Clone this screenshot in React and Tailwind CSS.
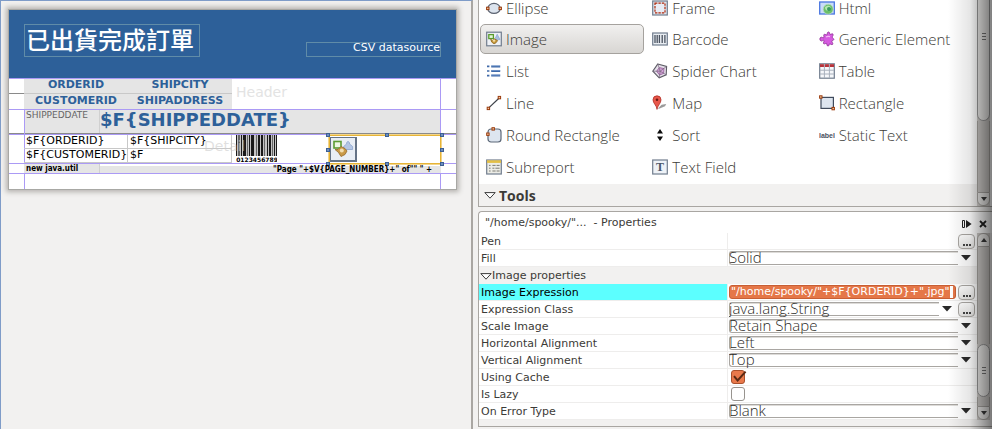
import React from "react";

const UI = "font-['Open_Sans','Noto_Sans',sans-serif] font-light";
const DEJA = "font-['DejaVu_Sans',sans-serif]";

const Svg = ({ children, className = "h-4 w-4" }) => (
  <svg viewBox="0 0 16 16" className={`shrink-0 ${className}`} aria-hidden="true">{children}</svg>
);
const Node = ({ x, y }) => (
  <rect x={x} y={y} width="2.4" height="2.4" fill="#f3c9a0" stroke="#9a3a0c" strokeWidth="1" />
);
const Paper = ({ y = 1, h = 14, fill = "#dfe6f0" }) => (
  <rect x="0.7" y={y} width="14.6" height={h} fill={fill} stroke="#717d8e" strokeWidth="1.2" />
);

const ICONS = {
  Ellipse: (
    <Svg><ellipse cx="8" cy="8.4" rx="6.2" ry="5" fill="#dce4ee" stroke="#5a6270" strokeWidth="1.2" /><Node x={0.6} y={7.2} /><Node x={13} y={7.2} /></Svg>
  ),
  Frame: (
    <Svg><Paper /><rect x="3" y="3.2" width="10" height="9.6" fill="#e8edf6" stroke="#b02a0c" strokeWidth="1.2" strokeDasharray="2.4 1" /></Svg>
  ),
  Html: (
    <Svg><rect x="0.7" y="2" width="14.6" height="12" fill="#c9dcf8" stroke="#4a76e0" strokeWidth="1.3" /><circle cx="9.2" cy="9.2" r="5" fill="#6cc06a" stroke="#b9d8c4" strokeWidth=".8" /><path d="M6 7.2c2-2.2 5-2 6 .2-1 2-3.4 1-3.2 3.4-1.6 0-2.8-1.6-2.8-3.6z" fill="#b5e8b0" /><circle cx="10" cy="9" r="2" fill="#3a9a62" /></Svg>
  ),
  Image: (
    <Svg>
      <Paper y={1.2} h={13.6} fill="#eef1f6" />
      <rect x="2.8" y="3.6" width="4.6" height="4" fill="#e4f3d8" stroke="#5a9c2e" strokeWidth="1.3" />
      <path d="M11.2 3.2l2.8 5.4H8.6z" fill="#a9bfdf" stroke="#7f9cc8" strokeWidth=".6" />
      <path d="M4.6 8.2l2 1.4 1.6-1.8 3.4 1.8-1.6 2.2-2 1-2.200-1.600z" fill="#c89a3c" stroke="#8f6820" strokeWidth=".8" />
      <circle cx="8" cy="9.6" r="1.2" fill="#f5e0a4" />
    </Svg>
  ),
  Barcode: (
    <Svg><Paper y={2} h={12} fill="#e9edf2" /><path d="M3 4v8M5.2 4v8M7.4 4v8M10.2 4v8M12.9 4v8" stroke="#4a5260" strokeWidth="1.3" /></Svg>
  ),
  "Generic Element": (
    <Svg><path d="M5.4 3.2c1 .2 2 1 2.8.4.2-.8-.2-2.4 1.2-2.6 1.6 0 1 2 1.6 2.4 1 .2 2.200-1.200 3-.2.6 1.200-.8 2-.8 3 .2 1 1.800 1.200 1.600 2.400-.2 1-1.800.6-2 1.400-.2 1.200 1.600 2.200.8 3.400-1 .8-2.200-.8-3.200-.4-.6.6 0 2-1.400 2-1.600-.2-.8-2-1.400-2.600-.8-.4-2 1-3 .2-.6-1.200.8-2 .4-3C4.200 8.800 3.600 10 2.200 10 .6 9.800.4 6.600 2 6.200c1.200-.2 2 1 2.800.4.600-1-.8-2.600.6-3.400z" fill="#d65be0" stroke="#94349c" strokeWidth=".9" /><path d="M7 6c1.500-1 3-.6 4-.4" stroke="#f4b4f6" strokeWidth="1.300" fill="none" /></Svg>
  ),
  List: (
    <Svg><path d="M5.200 3.400h9M5.200 8h9M5.200 12.600h9" stroke="#3f69a8" strokeWidth="2" /><path d="M1 3.400h2.400M1 8h2.400M1 12.600h2.400" stroke="#3f69a8" strokeWidth="1.600" /><path d="M5.200 2.800h9M5.200 7.400h9M5.200 12h9" stroke="#8fb0de" strokeWidth=".6" /></Svg>
  ),
  "Spider Chart": (
    <Svg><path d="M5.800 1L14.600 3.400l-.4 8.400-7 3L.8 8.200z" fill="#e6e0ea" stroke="#5c5c64" strokeWidth="1.100" /><path d="M7.400 4.600l4.600 1-.4 4.800-4 1.600-3-3.800z" fill="#d3a3d6" stroke="#8f5a96" strokeWidth=".8" /><path d="M5.800 1l2.400 7.200 6.400-4.800M.8 8.200h7.400l6 3.600M8.200 8.200l-1 6.600" fill="none" stroke="#75657c" strokeWidth=".7" /></Svg>
  ),
  Table: (
    <Svg><Paper y={0.8} h={14.4} fill="#f6f8fb" /><path d="M1 2.600h14" stroke="#b8323a" strokeWidth="2.800" /><path d="M1 7.200h14M1 11h14M5.400 1v14M10.400 1v14" stroke="#a8b0bc" strokeWidth="1" /></Svg>
  ),
  Line: (
    <Svg><path d="M2.200 13.400L13.200 3" stroke="#3c4048" strokeWidth="1.200" /><Node x={1.2} y={12.2} /><Node x={12.2} y={1.400} /></Svg>
  ),
  Map: (
    <Svg><path d="M6 13.400l3.600-3.600 4.600-.8-1.200 2.200-6 2.600z" fill="#8f8f8f" opacity=".9" /><path d="M5 14.400C4.800 10.400 1 8.400 1 4.800a4 4 0 018 0c0 3.600-3.400 5.600-4 9.600z" fill="#e8574a" stroke="#b03028" strokeWidth=".8" /><circle cx="5" cy="4.800" r="1.300" fill="#6a1a14" /></Svg>
  ),
  Rectangle: (
    <Svg><rect x="2" y="2.400" width="12.400" height="11" fill="#dde5ef" stroke="#3f4a5c" strokeWidth="1.200" /><Node x={0.600} y={0.800} /><Node x={13} y={12.400} /></Svg>
  ),
  "Round Rectangle": (
    <Svg><rect x="2" y="2" width="13" height="13" rx="3" fill="#dde5ef" stroke="#5c6878" strokeWidth="1.200" /><Node x={6} y={0.700} /><Node x={0.700} y={6} /></Svg>
  ),
  Sort: (
    <Svg><path d="M8 2l3 4.600H5zM8 14l3-4.600H5z" fill="#0a0a0a" /></Svg>
  ),
  "Static Text": (
    <Svg><text x="0" y="11" fontFamily="Liberation Sans, sans-serif" fontSize="7" fontWeight="700" fill="#4a5060">label</text></Svg>
  ),
  Subreport: (
    <Svg><Paper fill="#ecece6" /><path d="M1 2.600h14" stroke="#e3bf45" strokeWidth="2.600" /><path d="M3 6.400h1.600M3 9.200h1.600M3 12h1.600M6.400 6.400h3.200M10.600 6.400h3M6.400 9.200h2M9.400 9.200h4.200M6.400 12h3.200M10.600 12h3" stroke="#7c7c74" strokeWidth="1" /></Svg>
  ),
  "Text Field": (
    <Svg><Paper fill="#eef2f7" /><text x="8" y="12.200" textAnchor="middle" fontFamily="Liberation Serif, serif" fontSize="12" fontWeight="700" fill="#4a5668">T</text></Svg>
  ),
};

const PALETTE = [
  "Ellipse", "Frame", "Html",
  "Image", "Barcode", "Generic Element",
  "List", "Spider Chart", "Table",
  "Line", "Map", "Rectangle",
  "Round Rectangle", "Sort", "Static Text",
  "Subreport", "Text Field",
];

function PaletteItem({ name, firstRow }) {
  const selected = name === "Image";
  return (
    <button
      type="button"
      aria-pressed={selected}
      className={`flex items-center gap-1 whitespace-nowrap rounded-[5px] border-x px-[5px] text-[15px] text-[#3c3b37] ${
        firstRow ? "h-4 leading-4" : "h-[30px] border-y leading-5"
      } ${
        selected ? "border-[#a5a29e] bg-linear-to-b from-[#f1f0ef] to-[#d8d6d3]" : "border-transparent"
      }`}
    >
      {ICONS[name]}
      <span>{name}</span>
    </button>
  );
}

const Grip = () => (
  <span className="flex flex-col gap-[2px]">
    <i className="block h-px w-1 bg-[#777]" /><i className="block h-px w-1 bg-[#777]" /><i className="block h-px w-1 bg-[#777]" />
  </span>
);

function ScrollButton({ up = false }) {
  return (
    <button type="button" aria-label={up ? "Scroll up" : "Scroll down"} className={`flex h-[14px] shrink-0 items-center justify-center border border-[#aaa7a3] bg-[#f0efed] ${up ? "rounded-t-[6px]" : "rounded-b-[6px]"}`}>
      <svg viewBox="0 0 6 4" className="h-1 w-[6px]"><path d={up ? "M0 4h6L3 0z" : "M0 0h6L3 4z"} fill="#3c3c3c" /></svg>
    </button>
  );
}

const Triangle = () => (
  <svg viewBox="0 0 12 7" className="h-[7px] w-3 shrink-0"><path d="M.8.6h10.400L6 6.200z" fill="#fff" stroke="#3c3c3c" strokeWidth="1" /></svg>
);

function Palette() {
  return (
    <section className="flex h-[207px] overflow-hidden border-b border-l border-[#a9a6a2] bg-white">
      <div className="flex min-w-0 flex-1 flex-col">
        <div className={`grid flex-1 grid-cols-3 grid-rows-[22px] content-start gap-[2px] pl-px ${UI}`}>
          {PALETTE.map((name, i) => <PaletteItem key={name} name={name} firstRow={i < 3} />)}
        </div>
        <h2 className="flex h-[22px] items-center gap-[3px] bg-[#f2f1f0] pl-[5px] font-['Open_Sans',sans-serif] text-[14px] font-bold text-[#3c3b37]">
          <Triangle />Tools
        </h2>
      </div>
      <div className="mr-[2px] flex w-[13px] flex-col bg-[#cfccc9]">
        <div className="flex h-[121px] justify-center rounded-b-[7px] border border-t-0 border-[#999] bg-[#f0efed] pt-[33px]">
          <Grip />
        </div>
        <div className="flex-1 border-x border-[#aaa7a3]" />
        <ScrollButton />
      </div>
    </section>
  );
}

const MoreButton = ({ label }) => (
  <button type="button" aria-label={label} className="flex h-[15px] w-[17px] shrink-0 items-end justify-center gap-px rounded-[4px] border border-[#aaa7a3] bg-linear-to-b from-white to-[#e8e7e5] pb-[2px]">
    <i className="h-[2px] w-[2px] bg-[#444]" /><i className="h-[2px] w-[2px] bg-[#444]" /><i className="h-[2px] w-[2px] bg-[#444]" />
  </button>
);

function Combo({ id, value }) {
  return (
    <div className="flex h-full min-w-0 flex-1 items-center">
      <div className="relative h-full min-w-0 flex-1">
        <span className="absolute inset-x-0 top-px h-[14px] rounded-l-[3px] border border-r-0 border-[#a9a6a2] shadow-[inset_0_1px_0_#dddbd8]" />
        <select id={id} defaultValue={value} className={`relative -mt-[3px] block h-5 w-full appearance-none bg-transparent text-[15px] leading-5 text-[#2c2b28] outline-none ${UI}`}>
          <option>{value}</option>
        </select>
      </div>
      <svg viewBox="0 0 10 6" className="pointer-events-none ml-[3px] mr-1 h-[6px] w-[10px] shrink-0"><path d="M0 0h10L5 5.600z" fill="#2a2a2a" /></svg>
    </div>
  );
}

function Check({ id, checked }) {
  return (
    <div className="relative ml-[2px] h-[14px] w-4">
      <input id={id} type="checkbox" defaultChecked={checked} className="block h-[14px] w-[14px] appearance-none rounded-[3px] border border-[#98948f] bg-white checked:border-[#a8502c] checked:bg-[#e9794b]" />
      {checked && (
        <svg viewBox="0 0 16 14" className="pointer-events-none absolute left-0 top-0 h-[14px] w-4"><path d="M3 6.200l3.600 4.200L14.600 1.600" fill="none" stroke="#5a2a14" strokeWidth="2" /></svg>
      )}
    </div>
  );
}

function Row({ id, label, active, children }) {
  return (
    <div className="grid h-[17px] grid-cols-2 border-b border-[#eeedec] bg-white">
      <label htmlFor={id} className={`h-4 border-r border-[#eeedec] pl-[2px] pt-px leading-4 ${active ? "bg-[#5cffff] text-black" : ""}`}>{label}</label>
      <div className="flex h-4 min-w-0 items-center gap-[2px] pl-px pr-[2px]">{children}</div>
    </div>
  );
}

function Properties() {
  return (
    <section className={`mt-1 flex h-[216px] flex-col rounded-tl-[4px] border border-r-0 border-[#a9a6a2] bg-[#f2f1f0] text-[11px] text-[#3c3b37] ${DEJA}`}>
      <header className="flex h-[21px] shrink-0 items-center rounded-tl-[4px] bg-white pl-[6px] pr-[5px] pt-[2px]">
        <h2 className="flex-1 whitespace-pre">"/home/spooky/"...  - Properties</h2>
        <button type="button" aria-label="Minimize" className="mr-[7px]"><svg viewBox="0 0 10 8" className="h-2 w-[10px]"><path d="M.5.500h2v7h-2z" fill="#fff" stroke="#222" /><path d="M4 0v8l5.600-4z" fill="#222" /></svg></button>
        <button type="button" aria-label="Close"><svg viewBox="0 0 8 8" className="h-2 w-2"><path d="M1 1l6 6M7 1L1 7" stroke="#222" strokeWidth="1.800" /></svg></button>
      </header>
      <div className="flex h-[187px]">
        <div className="min-w-0 flex-1">
          <Row label="Pen"><span className="flex-1" /><MoreButton label="Edit pen" /></Row>
          <Row id="fill" label="Fill"><Combo id="fill" value="Solid" /></Row>
          <h3 className="flex h-[17px] items-center pl-px pt-px"><Triangle />Image properties</h3>
          <Row id="expr" label="Image Expression" active>
            <div className="flex h-[14px] min-w-0 flex-1 rounded-[3px] border border-[#c75f35] bg-[#e57748] pl-px pr-[2px]">
              <input id="expr" defaultValue={'"/home/spooky/"+$F{ORDERID}+".jpg"'} className="h-3 min-w-0 flex-1 bg-transparent text-[11px] leading-3 text-white outline-none" />
              <i className="h-3 w-[3px] bg-white" />
            </div>
            <MoreButton label="Edit image expression" />
          </Row>
          <Row id="class" label="Expression Class"><Combo id="class" value="java.lang.String" /><MoreButton label="Choose class" /></Row>
          <Row id="scale" label="Scale Image"><Combo id="scale" value="Retain Shape" /></Row>
          <Row id="halign" label="Horizontal Alignment"><Combo id="halign" value="Left" /></Row>
          <Row id="valign" label="Vertical Alignment"><Combo id="valign" value="Top" /></Row>
          <Row id="cache" label="Using Cache"><Check id="cache" checked /></Row>
          <Row id="lazy" label="Is Lazy"><Check id="lazy" /></Row>
          <Row id="onerror" label="On Error Type"><Combo id="onerror" value="Blank" /></Row>
        </div>
        <div className="mr-[2px] flex w-[13px] flex-col bg-[#cfccc9]">
          <ScrollButton up />
          <div className="flex-1 border-x border-[#aaa7a3]" />
          <div className="flex h-[53px] items-center justify-center rounded-[7px] border border-[#999] bg-[#f0efed]"><Grip /></div>
          <div className="h-[9px] border-x border-[#aaa7a3]" />
          <ScrollButton />
        </div>
      </div>
    </section>
  );
}

const BARS = [[0, 1], [2, 2], [5, 1], [7, 3], [11, 1], [13, 1], [15, 3], [20, 1], [22, 2], [25, 2], [28, 1], [31, 1], [33, 2], [36, 1], [38, 1], [40, 1]];

function Barcode() {
  return (
    <svg viewBox="0 0 41 28" className="ml-1 h-7 w-[41px]" role="img" aria-label="Barcode">
      <rect x="0" y="0" width="41" height="21" fill="#c4c4c4" />
      {BARS.map(([x, w], i) => <rect key={x} x={x} y="0" width={w} height="21" fill={i % 3 === 1 ? "#666" : "#1a1a1a"} />)}
      <text x="21" y="26.500" textAnchor="middle" fontFamily="DejaVu Sans, sans-serif" fontWeight="700" fontSize="6">0123456789</text>
    </svg>
  );
}

const HANDLES = [
  "-left-1 -top-[3px]", "left-1/2 -top-[3px]", "-right-1 -top-[3px]",
  "-left-1 top-3", "-right-1 top-3",
  "-left-1 -bottom-[3px]", "left-1/2 -bottom-[3px]", "-right-1 -bottom-[3px]",
];

function ImageElement() {
  return (
    <div className="relative z-10 ml-[52px] flex h-[29px] flex-1 border border-[#e6b437] bg-white shadow-[0_0_0_1px_#f3d58a]">
      <div className="my-px flex h-[25px] w-[27px] items-center justify-center border border-b-2 border-r-2 border-[#657386] bg-[#e9eef5]">
        <svg viewBox="0 0 22 20" className="h-5 w-[22px]">
          <path d="M16 2.500c1 0 1.600 1.200 1.600 2.500l3 2.500v3h-9v-3l3-2.500c0-1.300.4-2.500 1.400-2.500z" fill="#b4c6e4" stroke="#8aa3cd" strokeWidth=".8" />
          <rect x="2" y="2.500" width="7" height="6.500" fill="#edf7e4" stroke="#5c9c34" strokeWidth="1.600" />
          <path d="M3 10.500h3l3-3 4 2 2 2.500-2 3.500-4 2-2.500-4z" fill="#c99a48" stroke="#94682a" strokeWidth=".8" />
          <circle cx="9.800" cy="11.500" r="2" fill="#f2ddb0" />
        </svg>
      </div>
      {HANDLES.map((pos) => <i key={pos} className={`absolute h-1 w-1 border border-[#3d5f93] bg-[#6d8fbf] ${pos}`} />)}
    </div>
  );
}

const Cell = ({ children }) => (
  <div className="overflow-hidden whitespace-nowrap border-b border-r border-[#c8c8c8] pl-[2px] text-[11px] leading-[12px] text-black">{children}</div>
);

function ReportPage() {
  const band = "border-b border-[#ab9af5]";
  return (
    <article className={`relative w-[449px] border border-[#a8a8a4] bg-white shadow-[0_0_5px_2px_#b4b2ae] ${DEJA}`}>
      <div className="pointer-events-none absolute inset-x-[15px] bottom-0 top-[69px] border-x border-[#ab9af5]" />
      <div className={`flex h-[69px] items-start justify-between bg-[#2d6099] px-[15px] ${band}`}>
        <h1 className="mt-[14px] h-[33px] w-[176px] border border-[#608ca8] pl-px font-['Noto_Sans_CJK_TC',sans-serif] text-[24px] font-medium leading-[28px] text-white">已出貨完成訂單</h1>
        <p className="mt-8 h-[15px] w-[135px] border border-[#608ca8] text-right text-[11px] leading-[10px] text-white">CSV datasource</p>
      </div>
      <div className={`relative flex h-[31px] px-[15px] before:absolute before:left-0 before:top-[14px] before:h-px before:w-[15px] before:bg-[#8a8a8a] ${band}`}>
        <div className="grid w-[208px] grid-cols-2 grid-rows-[15px_15px] bg-[#e5e5e5] text-center text-[11px] font-bold leading-[12px] text-[#2d6099]">
          <span className="border-b border-[#c8c8c8]">ORDERID</span>
          <span className="border-b border-[#c8c8c8]">SHIPCITY</span>
          <span className="leading-[14px]">CUSTOMERID</span>
          <span className="leading-[14px]">SHIPADDRESS</span>
        </div>
        <span className="ml-1 mt-1 text-[14px] leading-[18px] text-[#e3e3e3]">Header</span>
      </div>
      <div className={`h-[25px] ${band}`}>
        <div className="h-6 border-b border-[#8a8a8a] px-[15px]">
          <div className="flex h-[23px] bg-[#e5e5e5]">
            <span className="w-[76px] border-r border-[#d0d0d0] pl-[2px] text-[9px] leading-[11px] text-[#666]">SHIPPEDDATE</span>
            <span className="text-[18px] font-bold leading-5 text-[#2d6099]">{"$F{SHIPPEDDATE}"}</span>
          </div>
        </div>
      </div>
      <div className={`relative flex h-[29px] px-[15px] ${band}`}>
        <div className="grid w-[208px] shrink-0 grid-cols-2 grid-rows-[14px_14px]">
          <Cell>{"$F{ORDERID}"}</Cell>
          <Cell>{"$F{SHIPCITY}"}</Cell>
          <Cell>{"$F{CUSTOMERID}"}</Cell>
          <Cell>$F</Cell>
        </div>
        <span className="absolute left-[195px] top-[3px] text-[14px] leading-[16px] text-[#cccccc]/60">Detail</span>
        <Barcode />
        <ImageElement />
      </div>
      <div className={`h-[10px] px-[15px] ${band}`}>
        <div className="relative z-20 flex h-[9px] font-['DejaVu_Sans_Condensed','DejaVu_Sans',sans-serif] text-[8px] font-bold leading-[9px] text-black">
          <span className="w-[76px] border-r border-[#d0d0d0] bg-[#e5e5e5] pl-[2px]">new java.util</span>
          <span className="mt-[2px] flex-1 whitespace-nowrap bg-[#e5e5e5] pr-[9px] text-right leading-[7px]">{'"Page "+$V{PAGE_NUMBER}+" of"" " +'}</span>
        </div>
      </div>
      <div className="h-[15px]" />
    </article>
  );
}

export default function App() {
  return (
    <div className="relative flex min-h-screen bg-[#f2f1f0]">
      <main className="w-[473px] shrink-0 border-l border-r-2 border-t border-l-[#7f9cc8] border-r-[#a9a6a2] border-t-[#7f9cc8] pl-[7px] pt-2">
        <ReportPage />
      </main>
      <aside className="min-w-0 flex-1 pl-[5px]">
        <Palette />
        <Properties />
      </aside>
      <div className="pointer-events-none absolute inset-y-0 right-0 w-11 bg-linear-to-r from-transparent via-black/10 to-black/50" />
    </div>
  );
}
